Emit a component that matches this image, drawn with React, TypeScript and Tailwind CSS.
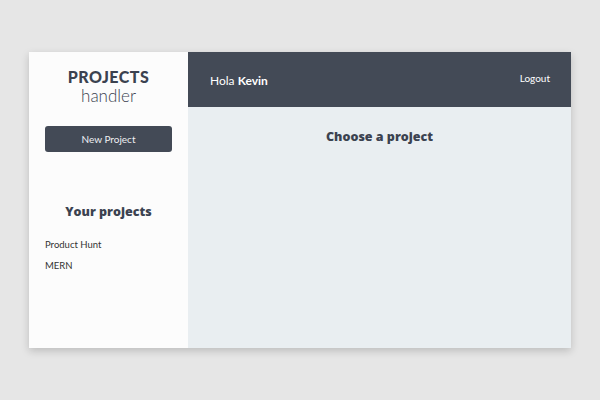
import React from 'react';

const projects = ['Product Hunt', 'MERN'];

export default function App() {
  return (
    <div className="w-[600px] h-[400px] bg-[#e6e6e6] flex items-center justify-center font-['Lato',sans-serif]">
      <div className="w-[542px] h-[296px] flex shadow-[0_3px_8px_rgba(0,0,0,0.18)]">
        <aside className="w-[159px] bg-[#fcfcfc] flex flex-col items-center pt-[16px]">
          <h1 className="text-[16px] leading-[18px] font-black tracking-[0.5px] text-[#3b4250]">PROJECTS</h1>
          <span className="text-[17px] leading-[19px] font-light text-[#3b4250]">handler</span>
          <button className="mt-[21px] w-[127px] h-[26px] rounded-[3px] bg-[#434a56] text-[#eef0f3] text-[10px]">
            New Project
          </button>
          <h2 className="mt-[51px] text-[12.5px] font-['Open_Sans',sans-serif] font-extrabold text-[#3b4250]">Your projects</h2>
          <ul className="self-stretch px-[16px] mt-[16px] flex flex-col gap-[8px]">
            {projects.map((p) => (
              <li key={p} className="text-[9.5px] leading-[13px] text-[#333]">{p}</li>
            ))}
          </ul>
        </aside>
        <main className="flex-1 flex flex-col bg-[#e9eef1]">
          <header className="h-[55px] bg-[#434a56] flex items-center justify-between pl-[22px] pr-[21px]">
            <span className="text-[12px] text-white mt-[2px]">
              Hola <b className="font-bold">Kevin</b>
            </span>
            <button className="text-[10px] text-white -mt-[2px]">Logout</button>
          </header>
          <h2 className="mt-[21px] text-center text-[12.5px] font-['Open_Sans',sans-serif] font-extrabold text-[#3b4250]">Choose a project</h2>
        </main>
      </div>
    </div>
  );
}
